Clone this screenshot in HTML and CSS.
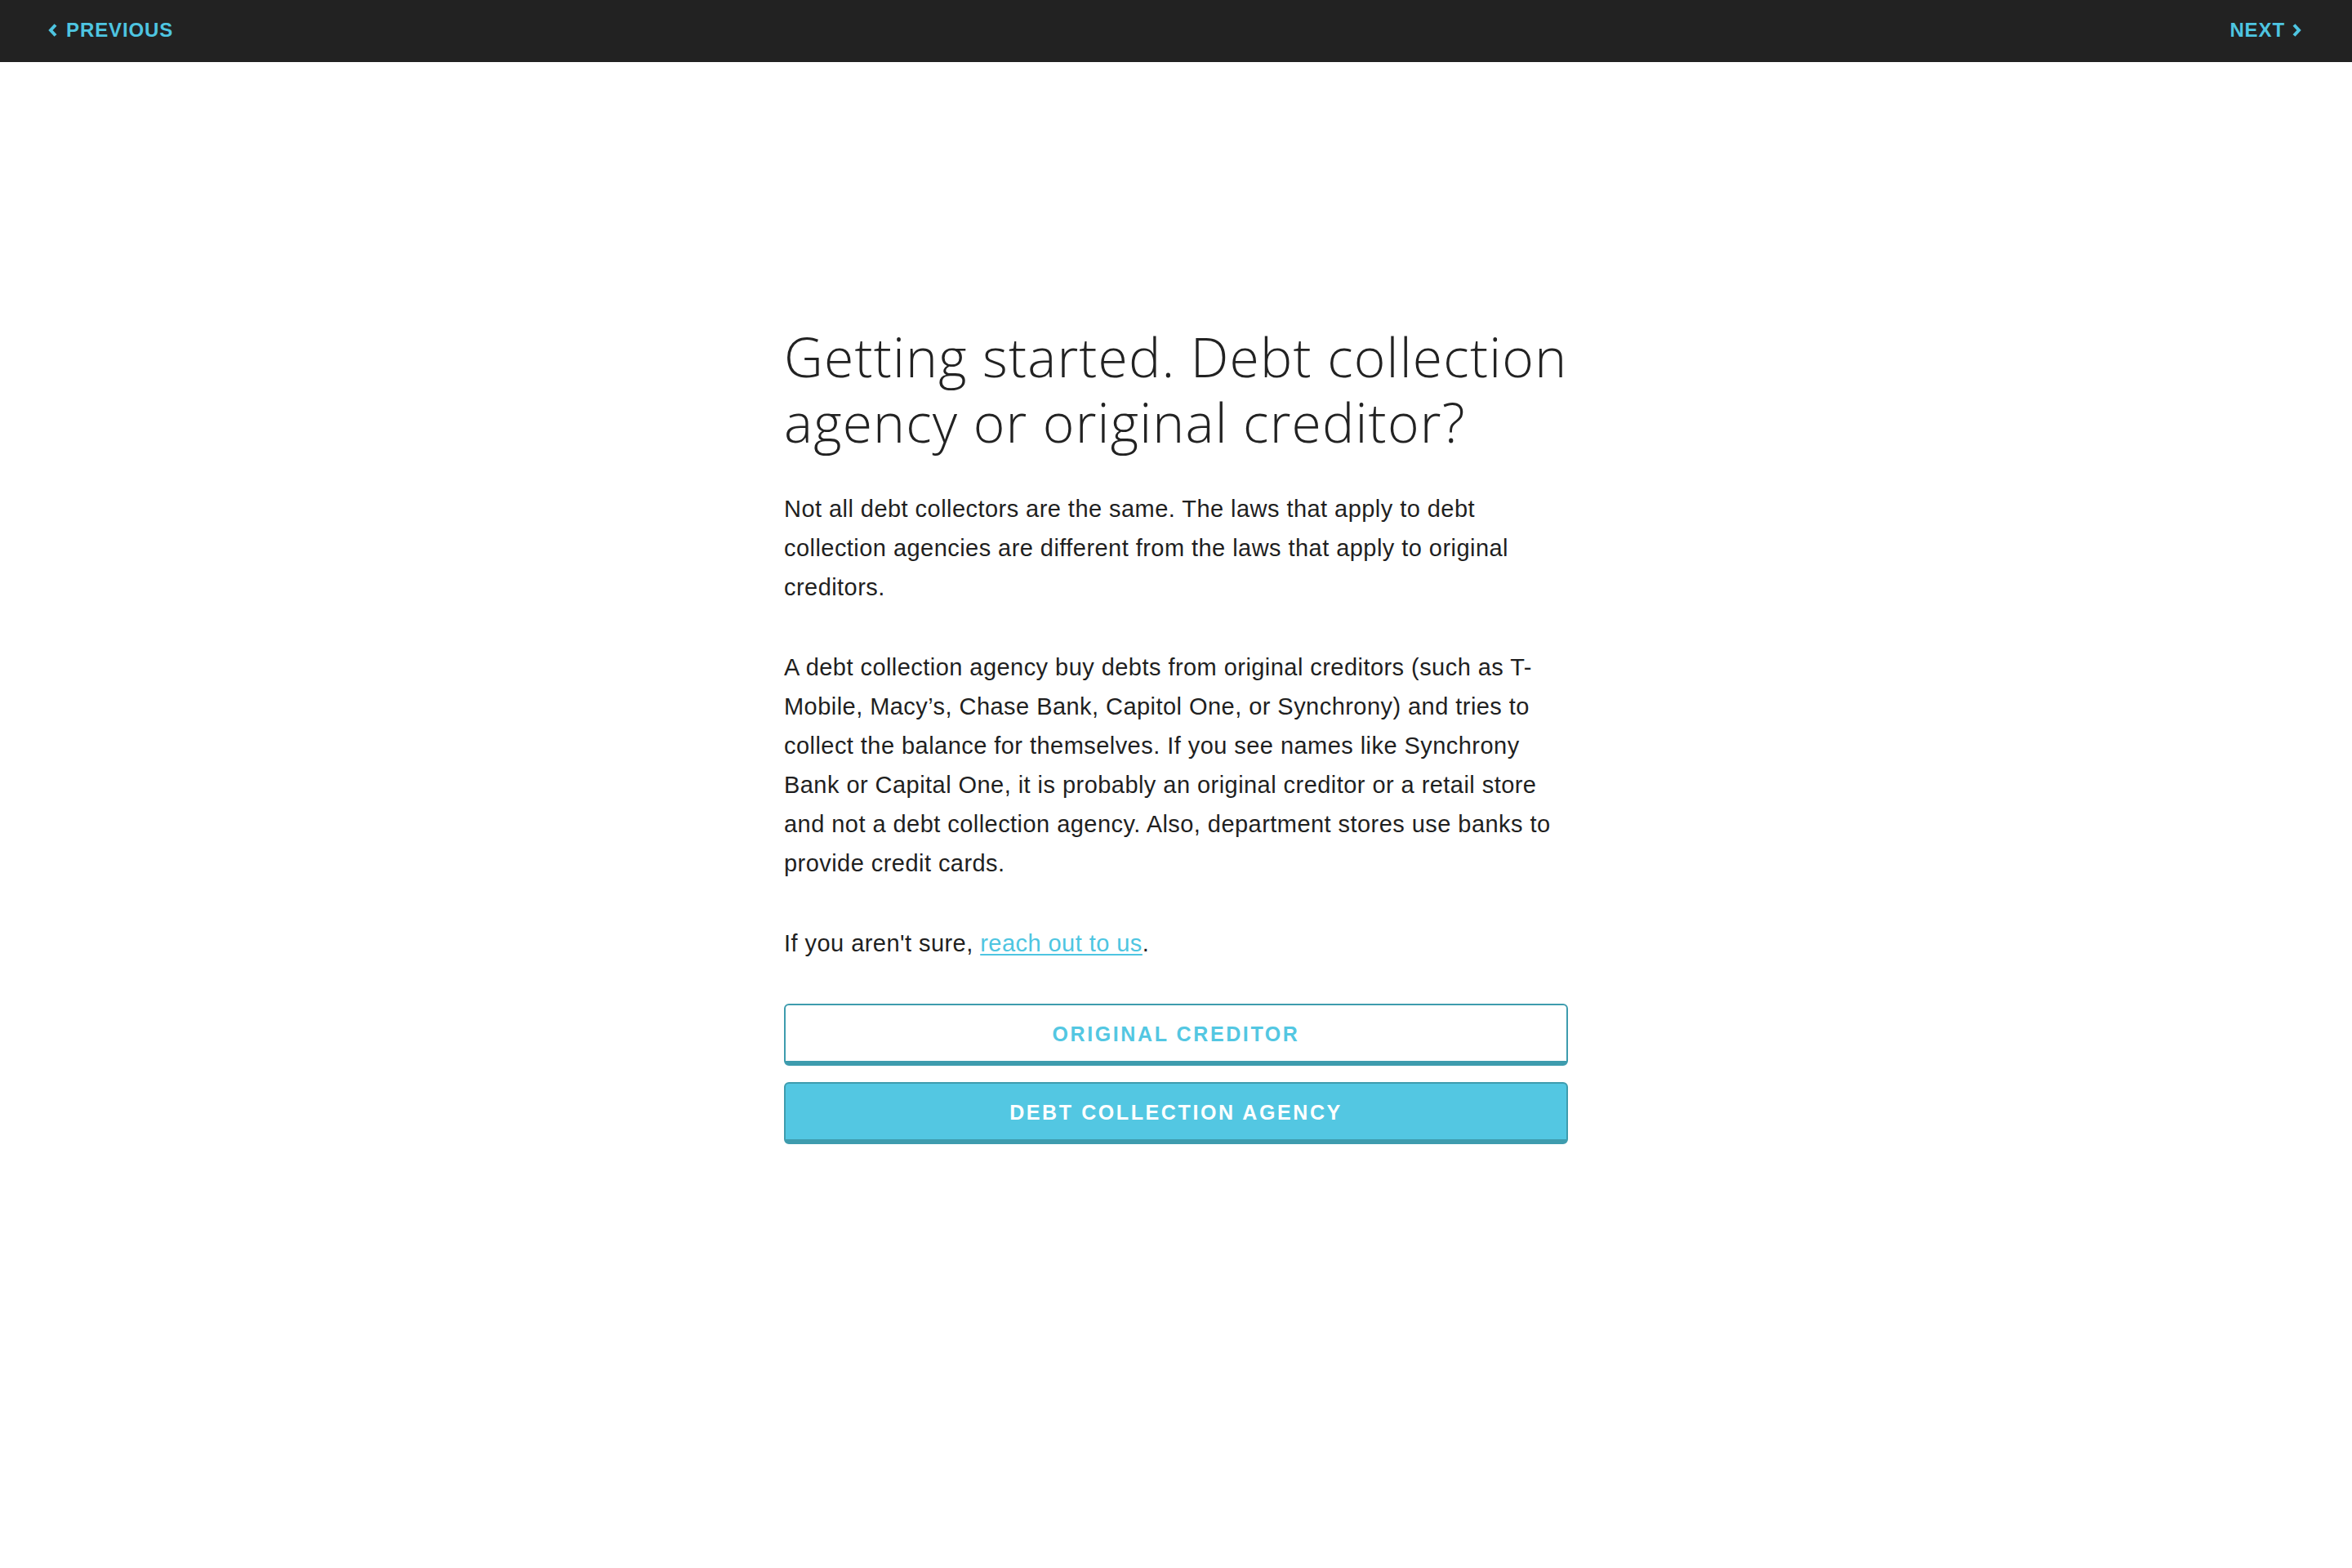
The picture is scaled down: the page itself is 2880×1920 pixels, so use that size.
FILE: index.html
```html
<!DOCTYPE html>
<html lang="en">
<head>
<meta charset="utf-8">
<title>Getting started</title>
<link rel="stylesheet" href="styles.css">
</head>
<body>
<nav class="topbar">
  <a class="nav-link" href="#">
    <svg class="chev" viewBox="0 0 11 16" width="11" height="16" aria-hidden="true"><polyline points="9,1.5 3,8 9,14.5" fill="none" stroke="currentColor" stroke-width="4" stroke-linejoin="miter"/></svg>
    <span>Previous</span>
  </a>
  <a class="nav-link next" href="#">
    <span>Next</span>
    <svg class="chev" viewBox="0 0 11 16" width="11" height="16" aria-hidden="true"><polyline points="2,1.5 8,8 2,14.5" fill="none" stroke="currentColor" stroke-width="4" stroke-linejoin="miter"/></svg>
  </a>
</nav>
<main class="content">
  <h1 class="title">Getting started. Debt collection agency or original creditor?</h1>
  <p class="text">Not all debt collectors are the same. The laws that apply to debt collection agencies are different from the laws that apply to original creditors.</p>
  <p class="text">A debt collection agency buy debts from original creditors (such as T-Mobile, Macy’s, Chase Bank, Capitol One, or Synchrony) and tries to collect the balance for themselves. If you see names like Synchrony Bank or Capital One, it is probably an original creditor or a retail store and not a debt collection agency. Also, department stores use banks to provide credit cards.</p>
  <p class="text last">If you aren't sure, <a class="link" href="#">reach out to us</a>.</p>
  <div class="actions">
    <button class="btn btn-outline" type="button">Original Creditor</button>
    <button class="btn btn-solid" type="button">Debt Collection Agency</button>
  </div>
</main>
</body>
</html>
```
FILE: styles.css
```css
html, body {
  margin: 0;
  padding: 0;
  background: #ffffff;
}

body {
  font-family: "Liberation Sans", Arial, sans-serif;
  color: #222222;
}

.topbar {
  height: 76px;
  background: #222222;
  display: flex;
  justify-content: space-between;
  align-items: center;
  padding: 0 62px 0 59px;
  box-sizing: border-box;
}

.nav-link {
  display: flex;
  align-items: center;
  gap: 11px;
  color: #4ec5e1;
  text-decoration: none;
  font-family: "Liberation Sans", Arial, sans-serif;
  font-weight: 700;
  font-size: 24px;
  letter-spacing: 0.9px;
  text-transform: uppercase;
  line-height: 1;
  padding-bottom: 2px;
}

.nav-link.next {
  gap: 9px;
}

.chev {
  display: block;
  color: #4ec5e1;
}

.content {
  width: 960px;
  margin: 0 auto;
  padding-top: 320px;
}

.title {
  font-family: "Open Sans", sans-serif;
  font-weight: 300;
  font-size: 66px;
  line-height: 80px;
  letter-spacing: 1.2px;
  color: #222222;
  margin: 0 0 43px 0;
}

.text {
  font-size: 29px;
  line-height: 48px;
  letter-spacing: 0.45px;
  margin: 0 0 50px 0;
  color: #1f1f1f;
}

.text.last {
  margin-bottom: 0;
}

.link {
  color: #4ec5e1;
  text-decoration: underline;
  text-underline-offset: 3px;
  text-decoration-thickness: 2px;
}

.actions {
  margin-top: 50px;
  display: flex;
  flex-direction: column;
  gap: 20px;
}

.btn {
  display: block;
  width: 100%;
  height: 76px;
  box-sizing: border-box;
  border: 2px solid #3e9cae;
  border-bottom-width: 6px;
  border-radius: 6px;
  font-family: "Liberation Sans", Arial, sans-serif;
  font-weight: 700;
  font-size: 25px;
  letter-spacing: 2.6px;
  text-transform: uppercase;
  cursor: pointer;
  padding: 3px 0 0 0;
}

.btn-outline {
  background: #ffffff;
  color: #53c7e2;
}

.btn-solid {
  background: #53c7e2;
  color: #ffffff;
}
```
